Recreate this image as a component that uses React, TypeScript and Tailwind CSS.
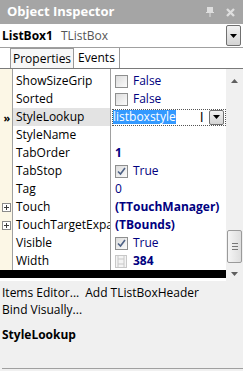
const font = "font-['Segoe_UI','Open_Sans',sans-serif]";

type Row = {
  name: string;
  value?: React.ReactNode;
  expand?: boolean;
  active?: boolean;
};

function Check({ checked }: { checked: boolean }) {
  return (
    <span className="flex h-[13px] w-[13px] items-center justify-center border border-[#8e8f8f] bg-gradient-to-br from-[#dcdcdc] to-[#fbfbfb]">
      {checked && (
        <svg width="9" height="9" viewBox="0 0 9 9">
          <path d="M1 4.5 L3.5 7 L8 1" fill="none" stroke="#4d6185" strokeWidth="1.6" />
        </svg>
      )}
    </span>
  );
}

function DropBtn({ className }: { className?: string }) {
  return (
    <span
      className={
        "flex items-center justify-center rounded-[2px] border border-[#707070] bg-gradient-to-b from-[#f2f2f2] to-[#d4d4d4] " +
        (className ?? "")
      }
    >
      <svg width="7" height="4" viewBox="0 0 7 4">
        <path d="M0 0 H7 L3.5 4 Z" fill="#000" />
      </svg>
    </span>
  );
}

const rows: Row[] = [
  {
    name: "ShowSizeGrip",
    value: (
      <span className="flex items-center gap-[5px] text-[#000080]">
        <Check checked={false} />
        False
      </span>
    ),
  },
  {
    name: "Sorted",
    value: (
      <span className="flex items-center gap-[5px] text-[#000080]">
        <Check checked={false} />
        False
      </span>
    ),
  },
  { name: "StyleLookup", active: true },
  { name: "StyleName" },
  { name: "TabOrder", value: <span className="font-bold text-[#000080]">1</span> },
  {
    name: "TabStop",
    value: (
      <span className="flex items-center gap-[5px] text-[#000080]">
        <Check checked />
        True
      </span>
    ),
  },
  { name: "Tag", value: <span className="text-[#000080]">0</span> },
  {
    name: "Touch",
    expand: true,
    value: <span className="font-bold text-[#000080]">(TTouchManager)</span>,
  },
  {
    name: "TouchTargetExpansion",
    expand: true,
    value: <span className="font-bold text-[#000080]">(TBounds)</span>,
  },
  {
    name: "Visible",
    value: (
      <span className="flex items-center gap-[5px] text-[#000080]">
        <Check checked />
        True
      </span>
    ),
  },
  {
    name: "Width",
    value: (
      <span className="flex items-center gap-[6px] font-bold text-[#000080]">
        <svg width="12" height="13" viewBox="0 0 12 13">
          <rect x="0.5" y="0.5" width="11" height="12" fill="#f4f4f4" stroke="#c8c8c8" />
          <path d="M3 1 V12 M9 1 V12 M3 4 H9 M3 9 H9" stroke="#c8c8c8" />
        </svg>
        384
      </span>
    ),
  },
];

export default function App() {
  return (
    <div className={`${font} flex h-[371px] w-[243px] flex-col overflow-hidden bg-[#f0f0f0] text-[12px] text-black`}>
      {/* title bar */}
      <div className="flex h-[24px] shrink-0 items-center justify-between bg-[#a5a5a5] pl-[7px] pr-[8px]">
        <span className="text-[13px] font-bold text-white">Object Inspector</span>
        <div className="flex items-center gap-[12px]">
          <svg width="8" height="10" viewBox="0 0 8 10">
            <path d="M1 0 H7 V5 H8 V6 H4.5 V10 H3.5 V6 H0 V5 H1 Z" fill="#dedede" />
          </svg>
          <svg width="9" height="9" viewBox="0 0 9 9">
            <path d="M1 1 L8 8 M8 1 L1 8" stroke="#dedede" strokeWidth="2.4" />
          </svg>
        </div>
      </div>

      {/* object selector */}
      <div className="flex h-[24px] shrink-0 items-center justify-between border-b border-[#a0a0a0] bg-white pl-[2px] pr-[2px]">
        <div className="flex items-baseline gap-[8px]">
          <span className="font-bold">ListBox1</span>
          <span className="text-[#555]">TListBox</span>
        </div>
        <DropBtn className="h-[21px] w-[15px]" />
      </div>

      {/* tabs */}
      <div className="flex h-[21px] shrink-0 items-end border-b border-[#7a7a7a] bg-white pl-[10px]">
        <span className="flex h-[20px] items-center border border-b-0 border-[#9a9a9a] bg-[#f7f7f7] px-[2px]">
          Properties
        </span>
        <span className="flex h-[20px] items-center border-r border-[#9a9a9a] px-[4px]">Events</span>
      </div>

      {/* grid + scrollbar */}
      <div className="flex h-[212px] shrink-0">
        <div className="flex w-[226px] flex-col bg-white">
          <div className="flex h-[3px]">
            <div className="w-[13px] border-r border-[#a0a0a0] bg-[#fcf7e6]" />
            <div className="w-[98px] border-r border-[#a0a0a0]" />
          </div>
          {rows.map((r) => (
            <div key={r.name} className="flex h-[18px]">
              <div className="flex w-[13px] items-center justify-center border-r border-[#a0a0a0] bg-[#fcf7e6]">
                {r.active && (
                  <span className="text-[11px] font-bold leading-none tracking-[-2px]">»</span>
                )}
                {r.expand && (
                  <span className="flex h-[9px] w-[9px] items-center justify-center border border-[#8a8a8a] bg-white">
                    <svg width="5" height="5" viewBox="0 0 5 5">
                      <path d="M0 2.5 H5 M2.5 0 V5" stroke="#3c3c3c" />
                    </svg>
                  </span>
                )}
              </div>
              <div
                className={
                  "flex w-[98px] items-center overflow-hidden whitespace-nowrap border-r border-[#a0a0a0] pl-[3px] " +
                  (r.active ? "bg-[#e3e3e3]" : "")
                }
              >
                {r.name}
              </div>
              <div className="flex min-w-0 flex-1 items-center whitespace-nowrap pl-[4px]">
                {r.active ? (
                  <div className="-ml-[3px] flex h-[17px] flex-1 items-center border border-dotted border-[#555] pr-[1px]">
                    <span className="bg-[#3399ff] leading-[14px] text-white">listboxstyle</span>
                    <span className="ml-[24px] text-[14px] leading-none">I</span>
                    <span className="flex-1" />
                    <DropBtn className="h-[15px] w-[15px]" />
                  </div>
                ) : (
                  r.value
                )}
              </div>
            </div>
          ))}
          <div className="h-[8px] bg-black" />
        </div>
        <div className="flex w-[17px] flex-col items-center bg-[#f0f0f0]">
          <svg className="mt-[10px]" width="7" height="4" viewBox="0 0 7 4">
            <path d="M0 4 H7 L3.5 0 Z" fill="#5f5f5f" />
          </svg>
          <div className="flex-1" />
          <div className="flex h-[33px] w-[15px] flex-col items-center justify-center gap-[2px] rounded-[2px] border border-[#9a9a9a] bg-gradient-to-r from-[#f5f5f5] to-[#dedede]">
            <span className="h-px w-[6px] bg-[#777]" />
            <span className="h-px w-[6px] bg-[#777]" />
            <span className="h-px w-[6px] bg-[#777]" />
          </div>
          <svg className="mb-[5px] mt-[9px]" width="7" height="4" viewBox="0 0 7 4">
            <path d="M0 0 H7 L3.5 4 Z" fill="#5f5f5f" />
          </svg>
        </div>
      </div>

      {/* bottom panel */}
      <div className="flex flex-1 flex-col pl-[2px] pt-[3px] text-[#000]">
        <div className="flex gap-[6px] leading-[17px]">
          <span>Items Editor...</span>
          <span>Add TListBoxHeader</span>
        </div>
        <div className="leading-[17px]">Bind Visually...</div>
        <div className="mt-[8px] font-bold leading-[17px]">StyleLookup</div>
        <div className="flex-1" />
        <div className="mb-[2px] h-px bg-[#a0a0a0]" />
      </div>
    </div>
  );
}
